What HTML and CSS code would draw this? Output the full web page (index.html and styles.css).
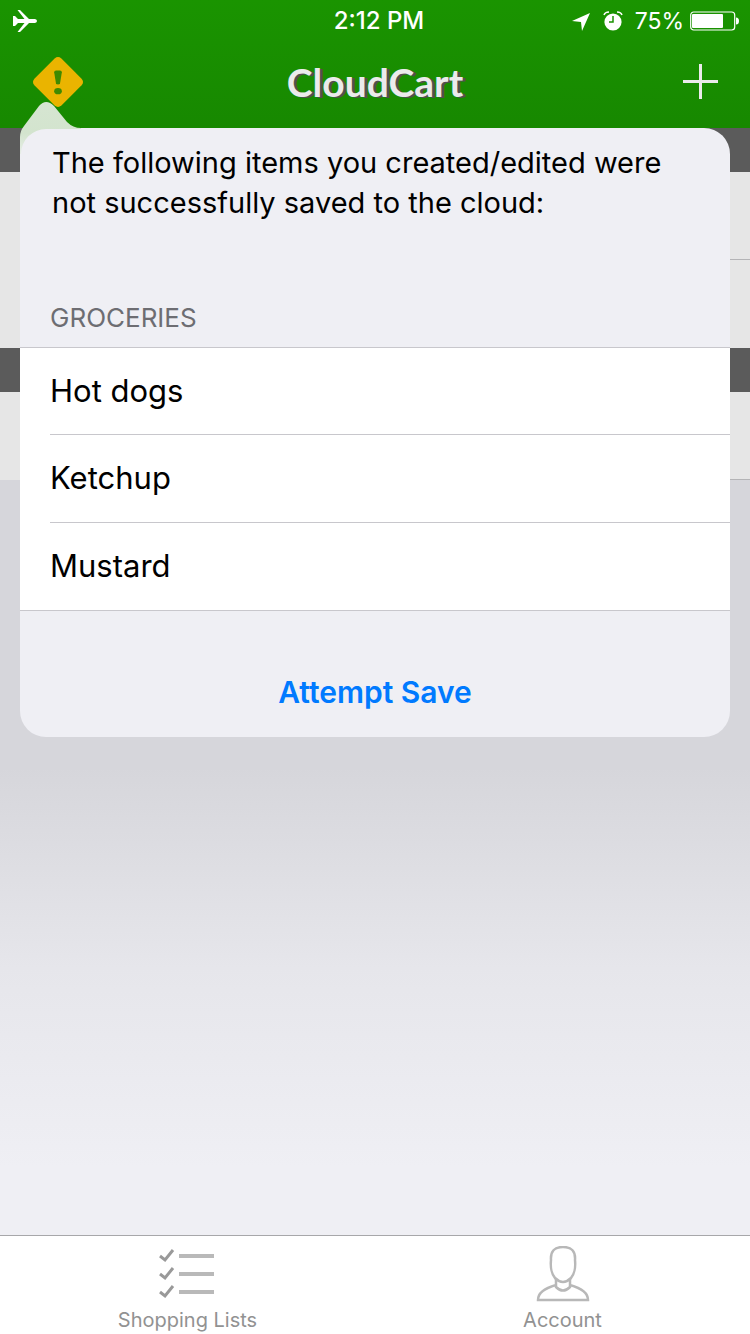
FILE: index.html
```html
<!DOCTYPE html>
<html lang="en">
<head>
<meta charset="utf-8">
<meta name="viewport" content="width=device-width, initial-scale=1">
<title>CloudCart</title>
<link rel="stylesheet" href="styles.css">
</head>
<body>
<div class="screen">
  <header class="top">
    <div class="status">
      <svg class="plane" width="25" height="24" viewBox="0 0 25 24" fill="#fff" aria-hidden="true"><path d="M1 7h2l3 3h6.500L5.500 1H8l9 9h6q2 .3 2 2t-2 2h-6L8 23H5.500l7-9H6l-3 3H1z"/></svg>
      <time class="clock">2:12 PM</time>
      <div class="indicators">
        <svg width="20" height="20" viewBox="0 0 20 20" fill="#fff" aria-hidden="true"><path d="M19 2 11 20 10 11 1 10z"/></svg>
        <svg class="alarm" width="20" height="20" viewBox="0 0 20 20" aria-hidden="true"><circle cx="10" cy="11" r="8.600" fill="#fff"/><path d="M1 4Q2 1 6 1M19 4Q18 1 14 1" fill="none" stroke="#fff" stroke-width="1.500"/><path d="M10 5v6H6" fill="none" stroke="#1a9300" stroke-width="1.500"/></svg>
        <span class="percent">75%</span>
        <svg width="50" height="20" viewBox="0 0 50 20" aria-hidden="true"><rect x=".7" y="1" width="44" height="18" rx="3" fill="none" stroke="#fff" stroke-width="1.200"/><rect x="2" y="3" width="31" height="14" rx="1" fill="#fff"/><path d="M46 6.500q3 0 3 3.500t-3 3.500z" fill="#fff"/></svg>
      </div>
    </div>
    <div class="nav">
      <button class="icon-button" type="button" aria-label="Unsaved items">
        <svg width="52" height="52" viewBox="0 0 54 54"><path d="M23.500 2.500Q27-.5 30.500 2.500L51.500 23.500Q54.500 27 51.500 30.500L30.500 51.500Q27 54.500 23.500 51.500L2.500 30.500Q-.5 27 2.500 23.500z" fill="#eab400"/><path d="M23 17q0-2 2-2h4q2 0 2 2l-2 12q-2 1-4 0z" fill="#3f8a00"/><ellipse cx="27" cy="36.500" rx="4" ry="3.200" fill="#3f8a00"/></svg>
      </button>
      <h1 class="title">CloudCart</h1>
      <button class="icon-button" type="button" aria-label="Add list">
        <svg width="35" height="35" viewBox="0 0 35 35"><path d="M17.500 0v35M0 17.500h35" stroke="#ebebeb" stroke-width="3"/></svg>
      </button>
    </div>
  </header>
  <main class="content">
    <div class="lists" aria-hidden="true">
      <div class="band"></div><div class="entry"></div><div class="entry last"></div>
      <div class="band"></div><div class="entry"></div>
    </div>
    <section class="popover" role="dialog" aria-label="Unsaved items">
      <svg class="arrow" width="64" height="52" viewBox="0 0 64 52" aria-hidden="true">
        <defs><linearGradient id="tip" x2="0" y2="1"><stop offset="0" stop-color="#d6e5d2"/><stop offset=".6" stop-color="#d3e4ce"/><stop offset="1" stop-color="#e8eee8"/></linearGradient></defs>
        <path d="M0 52V35Q0 29 4 24L19 4Q26-4 34 4L47 20Q53 26 61 26v1H26A25 25 0 0 0 1 52z" fill="url(#tip)"/>
      </svg>
      <p class="message">The following items you created/edited were not successfully saved to the cloud:</p>
      <h2 class="group">GROCERIES</h2>
      <ul class="items">
        <li class="item">Hot dogs</li>
        <li class="item">Ketchup</li>
        <li class="item">Mustard</li>
      </ul>
      <div class="actions"><button class="save" type="button">Attempt Save</button></div>
    </section>
  </main>
  <nav class="tabs">
    <a class="tab" href="#lists">
      <svg width="58" height="56" viewBox="0 0 58 56" fill="none"><g stroke="#b9b9b9" stroke-width="4"><path d="M20 10h35M20 28h35M20 46h35"/></g><g stroke="#999" stroke-width="3"><path d="M1 10l5 4 8-10M1 28l5 4 8-10M1 46l5 4 8-10"/></g></svg>
      <span>Shopping Lists</span>
    </a>
    <a class="tab" href="#account">
      <svg width="56" height="56" viewBox="0 0 56 56" fill="none" stroke="#b8b8b8" stroke-width="2.500"><path d="M16 14Q15 1 28 1t12 13c1 10-1 14-4 18q-4 4-8 4t-8-4c-3-4-5-8-4-18z"/><path d="M21 33v8q7 7 14 0v-8M21 39Q3 44 3 54h50Q53 44 35 39"/></svg>
      <span>Account</span>
    </a>
  </nav>
</div>
</body>
</html>
```
FILE: styles.css
```css
* { box-sizing: border-box; }
body { margin: 0; font-family: Inter, "Liberation Sans", sans-serif; }
h1, h2, p, ul { margin: 0; padding: 0; }
button { border: 0; padding: 0; background: none; font: inherit; }
svg { display: block; flex: none; }

.screen { display: flex; flex-direction: column; min-height: 100vh; }

.top { background: linear-gradient(#1a9400, #178800); color: #fff; }
.status {
  display: grid;
  grid-template-columns: 1fr auto 1fr;
  align-items: center;
  height: 40px;
  padding: 0 10px 0 12px;
}
.clock { font-size: 24px; font-weight: 500; line-height: 40px; padding: 1px 0 0 6px; }
.indicators { display: flex; align-items: center; justify-content: flex-end; gap: 6px; }
.alarm { margin: 0 6px; }
.percent { font-size: 23px; line-height: 40px; padding-top: 1px; }
.nav {
  display: grid;
  grid-template-columns: 1fr auto 1fr;
  align-items: center;
  height: 88px;
  padding: 0 32px 5px;
}
.icon-button { display: flex; }
.icon-button:last-child { justify-self: end; }
.icon-button:first-child { justify-self: start; }
.title {
  color: #ebebeb;
  font-family: Lato, sans-serif;
  font-size: 39px;
  font-weight: 700;
  line-height: 48px;
  text-shadow: 3px 1px 0 #505050;
}

.content {
  position: relative;
  flex: 1;
  background: linear-gradient(#d6d6db 0, #d6d6db 640px, #e6e6eb 840px, #efeff4 1040px);
}
.band { height: 44px; background: #5b5b5b; }
.entry {
  height: 88px;
  background: linear-gradient(#b4b4b6, #b4b4b6) 30px 100% / 100% 1px no-repeat #e6e6e6;
}
.last { background: #e6e6e6; }

.popover {
  position: absolute;
  top: 0;
  left: 20px;
  right: 20px;
  background: #efeff4;
  border-radius: 26px;
}
.arrow { position: absolute; top: -26px; left: 0; }
.message { padding: 15px 32px 0; font-size: 29px; line-height: 40px; }
.group {
  padding: 78px 30px 12px;
  color: #6d6d72;
  font-size: 26px;
  font-weight: 400;
  line-height: 34px;
}
.items {
  list-style: none;
  background: #fff;
  border: solid #c8c7cc;
  border-width: 1px 0;
}
.item {
  height: 88px;
  margin-left: 30px;
  font-size: 31px;
  line-height: 86px;
}
.item:first-child { height: 86px; }
.item + .item { border-top: 1px solid #c8c7cc; }
.actions { display: flex; justify-content: center; padding: 60px 0 24px; }
.save { color: #007aff; font-size: 30px; font-weight: 600; line-height: 42px; }

.tabs {
  display: grid;
  grid-template-columns: 1fr 1fr;
  background: #fff;
  border-top: 1px solid #a7a7aa;
}
.tab {
  display: flex;
  flex-direction: column;
  align-items: center;
  gap: 6px;
  padding: 10px 0 2px;
  color: #929292;
  font-size: 20px;
  line-height: 24px;
  text-decoration: none;
}
```
